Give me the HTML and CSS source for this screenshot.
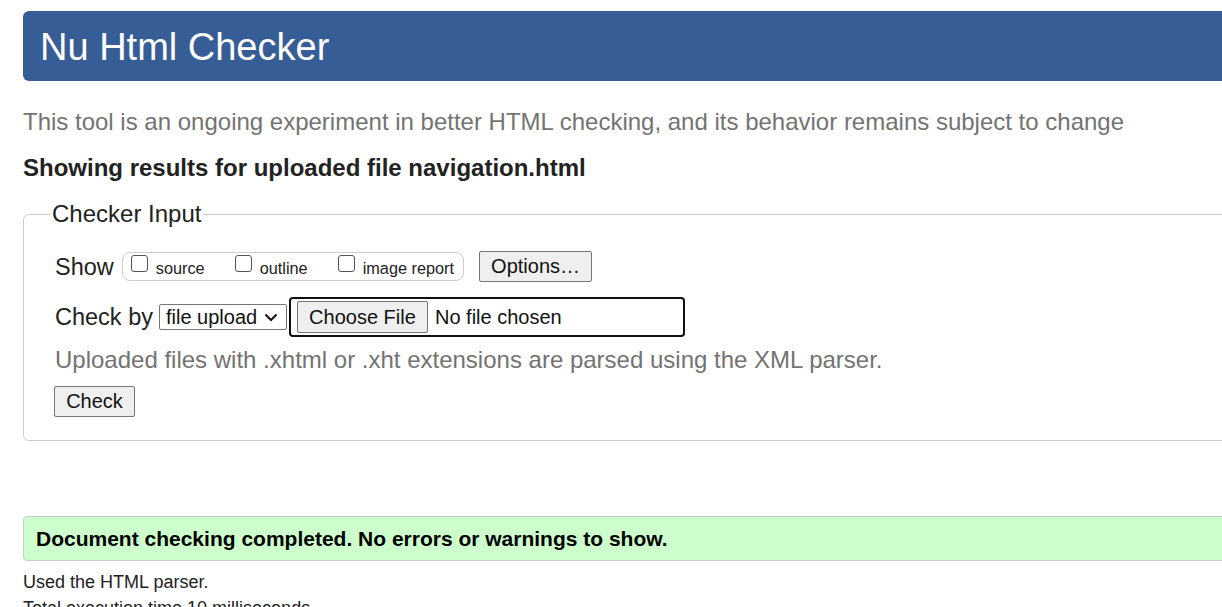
FILE: index.html
```html
<!DOCTYPE html>
<html lang="en">
<head>
<meta charset="utf-8">
<title>Nu Html Checker</title>
<link rel="stylesheet" href="styles.css">
</head>
<body>
<div class="page">
  <h1 class="masthead">Nu Html Checker</h1>
  <p class="intro">This tool is an ongoing experiment in better HTML checking, and its behavior remains subject to change</p>
  <h2 class="results-title">Showing results for uploaded file navigation.html</h2>
  <form class="checker-form">
    <fieldset class="checker-fieldset">
      <legend class="checker-legend">Checker Input</legend>
      <div class="row row-show">
        <span class="row-label">Show</span>
        <span class="show-group">
          <label class="show-option"><input type="checkbox" class="cb"><span>source</span></label>
          <label class="show-option"><input type="checkbox" class="cb"><span>outline</span></label>
          <label class="show-option"><input type="checkbox" class="cb"><span>image report</span></label>
        </span>
        <button type="button" class="btn btn-options">Options…</button>
      </div>
      <div class="row row-checkby">
        <span class="row-label">Check by</span>
        <span class="select-wrap">
          <select class="checkby-select"><option>file upload</option></select>
          <svg class="select-chevron" width="14" height="9" viewBox="0 0 14 9" aria-hidden="true"><path d="M1.5 1.5 L7 7 L12.5 1.5" fill="none" stroke="#111" stroke-width="2"/></svg>
        </span>
        <span class="file-box"><button type="button" class="btn btn-file">Choose File</button><span class="file-status">No file chosen</span></span>
      </div>
      <p class="upload-note">Uploaded files with .xhtml or .xht extensions are parsed using the XML parser.</p>
      <div class="row row-submit">
        <button type="button" class="btn btn-check">Check</button>
      </div>
    </fieldset>
  </form>
  <div class="success">Document checking completed. No errors or warnings to show.</div>
  <p class="details">Used the HTML parser.</p>
  <p class="details">Total execution time 10 milliseconds.</p>
</div>
</body>
</html>
```
FILE: styles.css
```css
html, body {
  margin: 0;
  padding: 0;
  overflow: hidden;
  background: #fff;
}
body {
  font-family: "Liberation Sans", Arial, sans-serif;
  color: #222;
}
.page {
  width: 1260px;
  padding: 11px 0 0 23px;
}
.masthead {
  margin: 0;
  height: 70px;
  line-height: 72px;
  padding-left: 17px;
  font-size: 38px;
  font-weight: normal;
  color: #fff;
  background: #365d95;
  border-radius: 6px 0 0 6px;
}
.intro {
  margin: 28px 0 0;
  font-size: 24px;
  line-height: 26px;
  color: #737373;
}
.results-title {
  margin: 20px 0 0;
  font-size: 24px;
  line-height: 26px;
  font-weight: bold;
  color: #222;
}
.checker-form {
  margin: 20px 0 0;
}
.checker-fieldset {
  margin: 0;
  border: 1px solid #ccc;
  border-radius: 6px 0 0 6px;
  padding: 24px 31px 23px 31px;
}
.checker-legend {
  font-size: 24px;
  line-height: 26px;
  padding: 0 2px;
  margin-left: -5px;
  color: #222;
}
.row {
  display: flex;
  align-items: center;
}
.row-label {
  font-size: 23.5px;
  line-height: 26px;
  margin-right: 8px;
}
.row-checkby .row-label {
  margin-right: 6px;
}
.show-group {
  display: inline-flex;
  align-items: flex-start;
  height: 27px;
  border: 1px solid #ccc;
  border-radius: 8px;
  padding: 0 9px 0 8px;
  margin-right: 15px;
}
.show-option {
  display: inline-flex;
  align-items: flex-start;
  font-size: 16.3px;
  line-height: 20px;
  margin-right: 30px;
}
.show-option:last-child {
  margin-right: 0;
}
.cb {
  appearance: none;
  -webkit-appearance: none;
  flex: none;
  width: 17px;
  height: 17px;
  margin: 2px 8px 0 0;
  border: 1px solid #555;
  border-radius: 3px;
  background: #fff;
}
.show-option span {
  padding-top: 5px;
}
.btn {
  font-family: "Liberation Sans", Arial, sans-serif;
  color: #111;
  background: #efefef;
  border: 1px solid #767676;
  border-radius: 2px;
  padding: 0;
}
.btn-options {
  font-size: 20px;
  height: 31px;
  width: 113px;
}
.row-checkby {
  margin-top: 15px;
}
.select-wrap {
  position: relative;
  display: inline-block;
  margin-right: 2px;
  height: 26px;
}
.checkby-select {
  appearance: none;
  -webkit-appearance: none;
  font-family: "Liberation Sans", Arial, sans-serif;
  font-size: 20px;
  height: 26px;
  width: 128px;
  margin: 0;
  padding: 0 0 0 6px;
  border: 1px solid #767676;
  border-radius: 2px;
  color: #111;
  background: #fff;
}
.select-chevron {
  position: absolute;
  right: 9px;
  top: 9px;
  pointer-events: none;
}
.file-box {
  display: inline-flex;
  align-items: center;
  width: 396px;
  height: 40px;
  box-sizing: border-box;
  border: 2px solid #111;
  border-radius: 4px;
  padding-left: 6px;
}
.btn-file {
  font-size: 20px;
  height: 32px;
  width: 131px;
}
.file-status {
  font-size: 20px;
  margin-left: 7px;
  color: #111;
}
.upload-note {
  margin: 10px 0 0;
  font-size: 24px;
  line-height: 26px;
  color: #737373;
}
.row-submit {
  margin-top: 13px;
}
.btn-check {
  font-size: 20px;
  height: 31px;
  width: 81px;
  margin-left: -1px;
}
.success {
  margin-top: 75px;
  height: 45px;
  box-sizing: border-box;
  line-height: 43px;
  padding-left: 12px;
  font-size: 21px;
  font-weight: bold;
  color: #000;
  background: #ccffcc;
  border: 1px solid #ccc;
  border-radius: 4px 0 0 4px;
}
.details {
  margin: 11px 0 0;
  font-size: 18px;
  line-height: 20px;
  color: #222;
}
.details + .details {
  margin-top: 6px;
}
```
